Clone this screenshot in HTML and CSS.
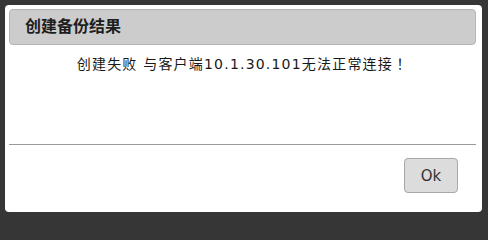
FILE: index.html
```html
<!DOCTYPE html>
<html>
<head>
<meta charset="utf-8">
<link rel="stylesheet" href="styles.css">
</head>
<body>
<div class="dialog">
  <div class="dialog-header">创建备份结果</div>
  <div class="dialog-content">
    <p class="message">创建失败 与客户端10.1.30.101无法正常连接<span class="punct">！</span></p>
  </div>
  <div class="dialog-footer">
    <button class="btn">Ok</button>
  </div>
</div>
</body>
</html>
```

FILE: styles.css
```css
html, body {
  margin: 0;
  padding: 0;
  background: #363636;
  width: 488px;
  height: 217px;
  overflow: hidden;
}
.dialog {
  box-sizing: border-box;
  margin: 5px;
  width: 477px;
  height: 207px;
  background: #fff;
  border-radius: 4px;
  padding: 4px 6px 4px 4px;
  display: flex;
  flex-direction: column;
  font-family: "DejaVu Sans", "Noto Sans CJK SC", sans-serif;
  color: #222;
}
.dialog-header {
  box-sizing: border-box;
  height: 36px;
  background: #cccccc;
  border: 1px solid #b4b4b4;
  border-radius: 4px;
  padding-left: 15px;
  font-size: 16px;
  font-weight: bold;
  line-height: 34px;
  color: #1e1e1e;
}
.dialog-content {
  flex: 1;
  border-bottom: 1px solid #9a9a9a;
}
.message {
  margin: 8px 0 0 0;
  text-align: center;
  font-size: 14px;
  letter-spacing: 1.2px;
  line-height: 20px;
  color: #1a1a1a;
}
.punct {
  font-family: "Noto Sans CJK TC", sans-serif;
}
.dialog-footer {
  height: 63px;
  box-sizing: border-box;
  padding: 13px 18px 0 0;
  display: flex;
  justify-content: flex-end;
  align-items: flex-start;
}
.btn {
  box-sizing: border-box;
  width: 54px;
  height: 35px;
  background: #dcdcdc;
  border: 1px solid #a8a8a8;
  border-radius: 4px;
  font-family: "DejaVu Sans", sans-serif;
  font-size: 15px;
  color: #333;
  padding: 0;
}
```
